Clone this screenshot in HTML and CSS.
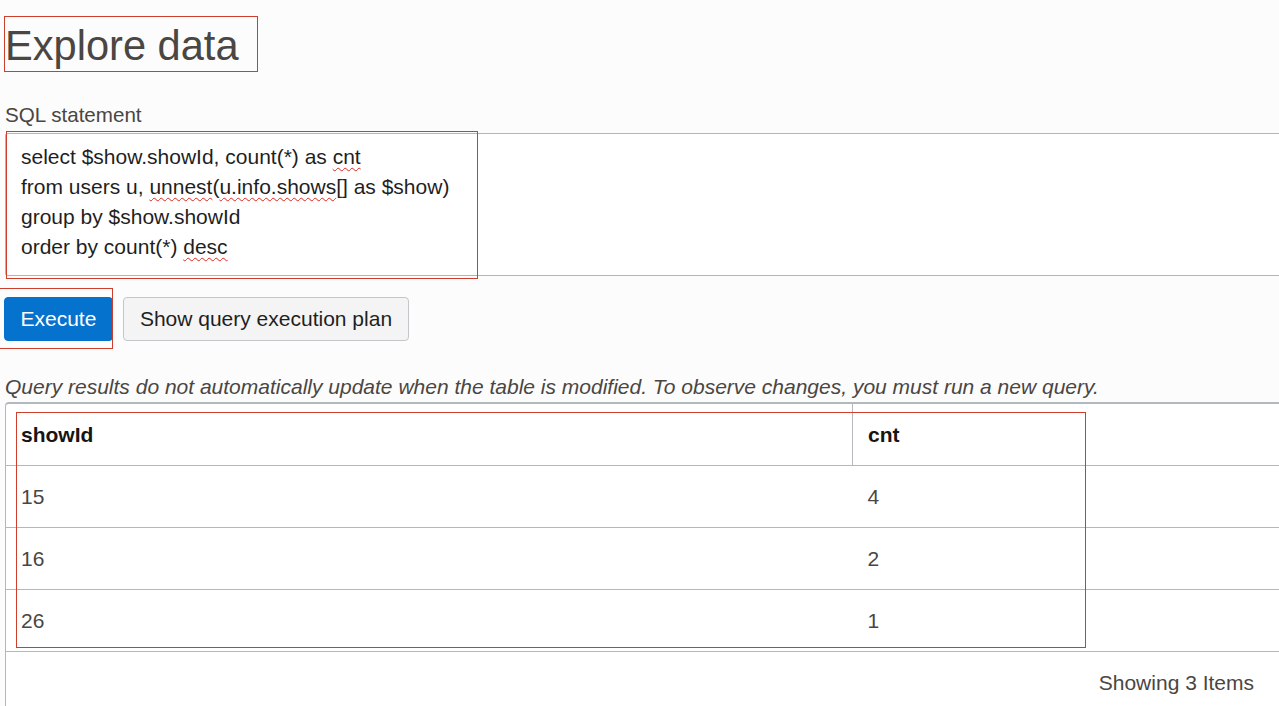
FILE: index.html
```html
<!DOCTYPE html>
<html>
<head>
<meta charset="utf-8">
<link rel="stylesheet" href="styles.css">
</head>
<body>
<div class="page">
  <h1 class="title">Explore data</h1>
  <div class="label">SQL statement</div>
  <div class="editor">
    <div class="code-line">select $show.showId, count(*) as <span class="spell">cnt</span></div>
    <div class="code-line">from users u, <span class="spell">unnest</span>(<span class="spell">u.info.shows</span>[] as $show)</div>
    <div class="code-line">group by $show.showId</div>
    <div class="code-line">order by count(*) <span class="spell">desc</span></div>
  </div>
  <div class="actions">
    <button class="btn btn-primary">Execute</button>
    <button class="btn btn-secondary">Show query execution plan</button>
  </div>
  <p class="note">Query results do not automatically update when the table is modified. To observe changes, you must run a new query.</p>
  <div class="results">
    <table class="grid">
      <thead>
        <tr><th class="col-a">showId</th><th class="col-b">cnt</th></tr>
      </thead>
      <tbody>
        <tr><td>15</td><td>4</td></tr>
        <tr><td>16</td><td>2</td></tr>
        <tr><td>26</td><td>1</td></tr>
      </tbody>
    </table>
    <div class="footer">Showing 3 Items</div>
  </div>

  <div class="mark mark-title"></div>
  <div class="mark mark-editor"></div>
  <div class="mark mark-exec"></div>
  <div class="mark mark-table"></div>
</div>
</body>
</html>
```

FILE: styles.css
```css
html, body {
  margin: 0;
  padding: 0;
  background: #fcfcfc;
  overflow: hidden;
}
.page {
  position: relative;
  padding: 0 0 0 5px;
  font-family: "Liberation Sans", Arial, sans-serif;
  color: #4a4643;
  height: 706px;
}
.title {
  margin: 0;
  padding-top: 22px;
  font-size: 41.6px;
  font-weight: normal;
  line-height: 48px;
  color: #4a4643;
}
.label {
  margin-top: 33px;
  font-size: 20.6px;
  line-height: 24px;
  color: #4a4643;
}
.editor {
  margin-top: 6px;
  background: #ffffff;
  border: 1px solid #b3b5ba;
  border-right: 0;
  border-radius: 3px 0 0 3px;
  padding: 8px 0 13px 15px;
  font-size: 21px;
  line-height: 30px;
  color: #1f1f1f;
}
.spell {
  text-decoration: underline wavy #e0261b;
  text-decoration-thickness: 1px;
  text-underline-offset: 3px;
}
.actions {
  display: flex;
  gap: 10px;
  margin-top: 21px;
  margin-left: -1px;
}
.btn {
  font-family: "Liberation Sans", Arial, sans-serif;
  font-size: 21px;
  height: 44px;
  border-radius: 4px;
  padding: 0 16px;
  line-height: 42px;
}
.btn-primary {
  background: #0572ce;
  border: 1px solid #0572ce;
  color: #ffffff;
  padding: 0 15.5px;
}
.btn-secondary {
  background: #f4f4f4;
  border: 1px solid #c4c6ca;
  color: #1f1f1f;
}
.note {
  margin: 34px 0 0 0;
  font-size: 21px;
  line-height: 24px;
  font-style: italic;
  color: #4a4643;
}
.results {
  margin-top: 3px;
  background: #ffffff;
  border-top: 2px solid #b3b8bd;
  border-left: 1px solid #b3b8bd;
  border-top-left-radius: 4px;
  height: 320px;
}
.grid {
  width: 100%;
  border-collapse: collapse;
  font-size: 21px;
}
.grid th, .grid td {
  text-align: left;
  padding: 0 0 0 15px;
  height: 61px;
  border-bottom: 1px solid #b3b8bd;
}
.grid th {
  font-weight: bold;
  color: #161513;
}
.grid td {
  color: #4a4643;
}
.col-a {
  width: 831px;
  border-right: 1px solid #b3b8bd;
}
.footer {
  text-align: right;
  padding: 19px 25px 0 0;
  font-size: 21px;
  line-height: 24px;
  color: #4a4643;
}
.mark {
  position: absolute;
  border: 1px solid #cc3f2c;
  pointer-events: none;
}
.mark-title { left: 4px; top: 16px; width: 252px; height: 54px; }
.mark-editor { left: 6px; top: 131px; width: 470px; height: 146px; }
.mark-exec { left: -5px; top: 288px; width: 116px; height: 59px; }
.mark-table { left: 16px; top: 412px; width: 1068px; height: 234px; }
```
